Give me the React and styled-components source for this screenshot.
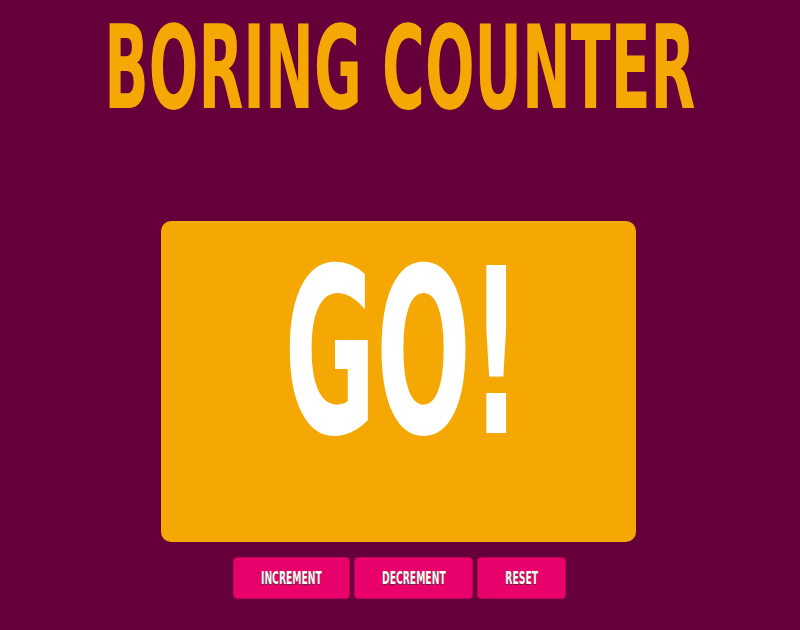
import styled, { createGlobalStyle } from 'styled-components';
import { useState } from 'react';

const GlobalStyle = createGlobalStyle`
  html, body {
    margin: 0;
    padding: 0;
    background: #65003a;
  }
  body {
    font-family: "DejaVu Sans Condensed", "DejaVu Sans", sans-serif;
    font-weight: 700;
  }
`;

const Page = styled.div`
  width: 800px;
  min-height: 630px;
  display: flex;
  flex-direction: column;
  align-items: center;
`;

// condensed display face: no real one installed, so squeeze DejaVu Condensed
const Squeeze = styled.span`
  display: inline-block;
  white-space: nowrap;
  line-height: 1;
  transform: scale(${({ sx }) => sx}, ${({ sy }) => sy || 1});
  transform-origin: center center;
`;

const Title = styled.h1`
  margin: 0;
  height: 136px;
  display: flex;
  align-items: center;
  justify-content: center;
  color: #f5a804;
  font-size: 70px;
  line-height: 1;
`;

const Display = styled.div`
  margin-top: 85px;
  margin-right: 3px;
  width: 475px;
  height: 321px;
  box-sizing: border-box;
  background: #f5a704;
  border-radius: 10px;
  display: flex;
  justify-content: center;
  padding: 18px 0 0 10px;
  color: #fff;
  font-size: 230px;
  line-height: 1;
`;

const Controls = styled.div`
  margin-top: 15px;
  margin-right: 1px;
  display: flex;
  gap: 4px;
`;

const Button = styled.button`
  width: ${({ w }) => w}px;
  height: 42px;
  box-sizing: border-box;
  border: 1px solid #c0005a;
  border-radius: 4px;
  background: #e8006b;
  color: #fffaf2;
  font-family: inherit;
  font-weight: 700;
  font-size: 18px;
  padding: 0;
  cursor: pointer;
  text-shadow: -1px 1px 0 #5a2a3a;
  display: flex;
  align-items: center;
  justify-content: center;
`;

const App = () => {
  const [count, setCount] = useState(0);
  const label = count === 0 ? 'GO!' : String(count);

  return (
    <Page>
      <GlobalStyle />
      <Title>
        <Squeeze sx={0.927} sy={1.646}>
          BORING COUNTER
        </Squeeze>
      </Title>
      <Display>
        <Squeeze sx={0.54}>{label}</Squeeze>
      </Display>
      <Controls>
        <Button w={117} onClick={() => setCount(count + 1)}>
          <Squeeze sx={0.57}>INCREMENT</Squeeze>
        </Button>
        <Button w={119} onClick={() => setCount(count - 1)}>
          <Squeeze sx={0.57}>DECREMENT</Squeeze>
        </Button>
        <Button w={89} onClick={() => setCount(0)}>
          <Squeeze sx={0.57}>RESET</Squeeze>
        </Button>
      </Controls>
    </Page>
  );
};

export default App;
